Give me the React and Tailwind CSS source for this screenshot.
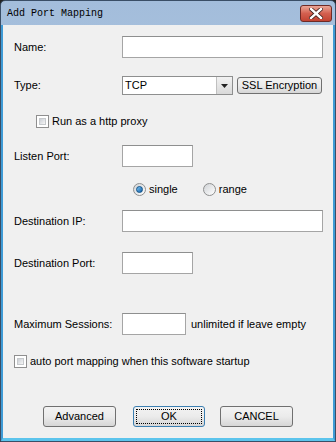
import React from 'react'

const font = { fontFamily: '"Liberation Sans", Arial, sans-serif' }

const TextBox = ({ className }) => (
  <div className={`h-[22px] bg-white border border-[#a5a5a5] border-t-[#8e8f8f] ${className}`} />
)

const Button = ({ children, className = '', focused = false }) => (
  <div
    className={`flex items-center justify-center rounded-[3px] border bg-gradient-to-b from-[#f3f3f3] via-[#ebebeb] to-[#d6d6d6] text-[11px] leading-[13px] text-black ${
      focused ? 'border-[#3c7fb1] p-[2px]' : 'border-[#707070]'
    } ${className}`}
  >
    {focused ? (
      <div className="flex h-full w-full items-center justify-center border border-dotted border-black">{children}</div>
    ) : (
      children
    )}
  </div>
)

const CheckBox = () => (
  <div className="h-[13px] w-[13px] shrink-0 border border-[#8f8f8f] bg-white p-[2px]">
    <div className="h-full w-full border border-[#c6c9cc] bg-gradient-to-br from-[#cbcfd5] to-[#f6f6f6]" />
  </div>
)

const Radio = ({ checked }) => (
  <div className="flex h-[13px] w-[13px] shrink-0 items-center justify-center rounded-full border border-[#8e8f8f] bg-gradient-to-br from-[#d0d3d6] to-[#ffffff]">
    {checked && (
      <div className="h-[7px] w-[7px] rounded-full border border-[#0d4f86] bg-gradient-to-br from-[#7cc6f5] to-[#0a5fa6]" />
    )}
  </div>
)

const Row = ({ label, children, className = '' }) => (
  <div className={`flex items-center ${className}`}>
    <div className="w-[108px] shrink-0 text-[11px] leading-[13px]">{label}</div>
    {children}
  </div>
)

export default function App() {
  return (
    <div className="h-[442px] w-[336px] bg-[#222]" style={font}>
      <div className="flex h-full w-full flex-col overflow-hidden rounded-t-[5px] border border-[#3a4e66] bg-gradient-to-b from-[#a3bddb] to-[#c0d5ea]">
        {/* title bar */}
        <div className="flex h-[24px] shrink-0 items-center justify-between pl-[6px] pr-[3px]">
          <span className="text-[10px] text-black" style={{ fontFamily: '"Liberation Mono", "Courier New", monospace' }}>
            Add Port Mapping
          </span>
          <div className="mt-[1px] flex h-[17px] w-[32px] items-center justify-center rounded-[3px] border border-[#6e2a26] bg-gradient-to-b from-[#e9a597] via-[#d35f4f] to-[#c24332]">
            <svg width="14" height="11" viewBox="0 0 14 11">
              <path d="M2 1 L7 5.5 M12 1 L7 5.5 M2 10 L7 5.5 M12 10 L7 5.5" stroke="#3d1c18" strokeWidth="4" strokeLinecap="square" />
              <path d="M2 1 L12 10 M12 1 L2 10" stroke="#ffffff" strokeWidth="2.4" strokeLinecap="square" />
            </svg>
          </div>
        </div>

        {/* body */}
        <div className="flex flex-1 flex-col border-x-2 border-b-[3px] border-x-[#3f9bd6] border-b-[#5cc4ec] bg-[#f0f0f0] pl-[11px] text-black">
          <Row label="Name:" className="mt-[11px]">
            <TextBox className="w-[201px]" />
          </Row>

          <Row label="Type:" className="mt-[18px]">
            <div className="flex h-[19px] w-[111px] border border-[#8e8f8f] bg-white">
              <div className="flex flex-1 items-center pl-[2px] text-[11px] leading-[13px]">TCP</div>
              <div className="flex w-[16px] items-center justify-center border-l border-[#c0c0c0] bg-gradient-to-b from-[#f2f2f2] to-[#d9d9d9]">
                <svg width="7" height="4" viewBox="0 0 7 4">
                  <path d="M0 0 H7 L3.5 4 Z" fill="#222" />
                </svg>
              </div>
            </div>
            <Button className="ml-[4px] h-[17px] w-[85px]">SSL Encryption</Button>
          </Row>

          <div className="ml-[22px] mt-[20px] flex h-[13px] items-center gap-[3px] text-[11px] leading-[13px]">
            <CheckBox />
            <span>Run as a http proxy</span>
          </div>

          <Row label="Listen Port:" className="mt-[17px]">
            <TextBox className="w-[71px]" />
          </Row>

          <div className="ml-[119px] mt-[16px] flex h-[13px] items-center text-[11px] leading-[13px]">
            <Radio checked />
            <span className="ml-[3px]">single</span>
            <div className="ml-[25px]">
              <Radio />
            </div>
            <span className="ml-[3px]">range</span>
          </div>

          <Row label="Destination IP:" className="mt-[14px]">
            <TextBox className="w-[201px]" />
          </Row>

          <Row label="Destination Port:" className="mt-[20px]">
            <TextBox className="w-[71px]" />
          </Row>

          <Row label="Maximum Sessions:" className="mt-[39px]">
            <TextBox className="w-[64px]" />
            <span className="ml-[5px] text-[11px] leading-[13px]">unlimited if leave empty</span>
          </Row>

          <div className="mt-[20px] flex h-[13px] items-center gap-[3px] text-[11px] leading-[13px]">
            <CheckBox />
            <span>auto port mapping when this software startup</span>
          </div>

          <div className="mt-[38px] flex items-center">
            <Button className="ml-[29px] h-[21px] w-[73px]">Advanced</Button>
            <Button focused className="ml-[17px] h-[21px] w-[72px]">OK</Button>
            <Button className="ml-[15px] h-[21px] w-[73px]">CANCEL</Button>
          </div>
        </div>
      </div>
    </div>
  )
}
